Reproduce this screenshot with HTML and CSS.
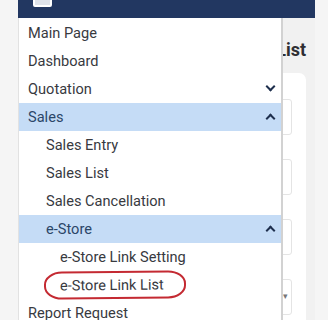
FILE: index.html
```html
<!DOCTYPE html>
<html lang="en">
<head>
  <meta charset="UTF-8" />
  <meta name="viewport" content="width=device-width, initial-scale=1.0"/>
  <title>e-Store Link List</title>
  <link rel="stylesheet" href="styles.css">
</head>
<body>
  <div class="shell">
    <div class="topbar">
      <span class="menu-btn"></span>
    </div>

    <div class="main">
      <h2 class="page-title">e-Store Link List</h2>
      <div class="card">
        <div class="field"></div>
        <div class="field"></div>
        <div class="field"></div>
        <div class="field select"><span class="caret">&#9662;</span></div>
      </div>
    </div>

    <!-- dropdown side menu, opened over the page -->
    <ul class="sidenav">
      <li class="item">Main Page</li>
      <li class="item">Dashboard</li>
      <li class="item">Quotation <span class="chev down"></span></li>
      <li class="item open">Sales <span class="chev up"></span></li>
      <li class="item lvl1">Sales Entry</li>
      <li class="item lvl1">Sales List</li>
      <li class="item lvl1">Sales Cancellation</li>
      <li class="item lvl1 open">e-Store <span class="chev up"></span></li>
      <li class="item lvl2">e-Store Link Setting</li>
      <li class="item lvl2"><span class="marked">e-Store Link List</span></li>
      <li class="item">Report Request</li>
    </ul>
  </div>
</body>
</html>
```

FILE: styles.css
```css
html, body {
  overflow: hidden;
}

body {
  margin: 0;
  font-family: Roboto, "Noto Sans", sans-serif;
  background-color: #f5f5f5;
  height: 320px;
}

.shell {
  position: relative;
  margin-left: 18px;
  width: 297px;
  height: 320px;
  overflow: hidden;
  background-color: #f1f1f1;
}

.topbar {
  display: flex;
  align-items: flex-start;
  height: 18px;
  background-color: #223761;
  padding-left: 15px;
  overflow: hidden;
}

.menu-btn {
  display: block;
  width: 15px;
  height: 8px;
  margin-top: -5px;
  border: 2px solid #ffffff;
  border-radius: 2px;
  background: #dfe3ea;
}

.main {
  height: 302px;
  overflow: hidden;
  padding: 0 9px 0 20px;
}

.page-title {
  margin: 0;
  padding-top: 21px;
  height: 34px;
  font-size: 18px;
  font-weight: 700;
  color: #2f2f33;
  text-align: right;
  white-space: nowrap;
}

.card {
  background: #ffffff;
  border-radius: 7px;
  padding: 26px 14px 0 14px;
  height: 250px;
}

.field {
  position: relative;
  height: 34px;
  border: 1px solid #e4e4e4;
  border-radius: 3px;
  margin-bottom: 24px;
}

.field.select {
  margin-top: 3px;
}

.caret {
  position: absolute;
  right: 3px;
  top: 11px;
  font-size: 9px;
  color: #777777;
}

/* menu */

.sidenav {
  position: absolute;
  left: 0;
  top: 18px;
  width: 265px;
  height: 302px;
  margin: 0;
  padding: 1px 0 0 0;
  list-style: none;
  background: #ffffff;
  border-left: 1px solid #e2e2e2;
  border-right: 2px solid #d2d2d2;
  box-sizing: border-box;
}

.item {
  position: relative;
  height: 28px;
  line-height: 28px;
  padding-left: 9px;
  font-size: 14.6px;
  color: #383a3f;
  white-space: nowrap;
}

.item.lvl1 {
  padding-left: 27px;
}

.item.lvl2 {
  padding-left: 41px;
}

.item.open {
  background-color: #c5dcf6;
  color: #2b4668;
}

.chev {
  position: absolute;
  right: 7px;
  top: 10px;
  width: 5px;
  height: 5px;
  border-right: 2.5px solid #1e2f4d;
  border-bottom: 2.5px solid #1e2f4d;
}

.chev.down {
  transform: rotate(45deg);
  top: 8px;
}

.chev.up {
  transform: rotate(-135deg);
  top: 12px;
}

.marked {
  display: inline-block;
  height: 24px;
  line-height: 24px;
  margin-left: -16px;
  padding: 0 20px 0 14px;
  border: 2px solid #c42a32;
  border-radius: 18px / 13px;
  transform: rotate(-0.6deg);
}
```
